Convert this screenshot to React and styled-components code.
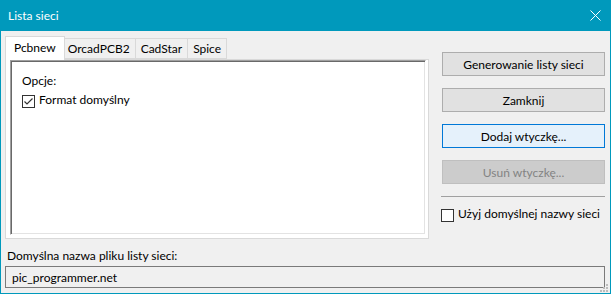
import styled, { createGlobalStyle } from "styled-components";

const GlobalStyle = createGlobalStyle`
  html, body { margin: 0; padding: 0; background: #f0f0f0; }
  body {
    font-family: Lato, "Segoe UI", "Noto Sans", sans-serif;
    font-size: 12px;
    color: #000;
  }
  * { box-sizing: border-box; }
`;

const tabs = ["Pcbnew", "OrcadPCB2", "CadStar", "Spice"];

const CheckBox = ({ checked }) => (
  <Box>
    {checked && (
      <svg width="11" height="11" viewBox="0 0 11 11">
        <polyline points="1.5,5.5 4,8 9.5,2.5" fill="none" stroke="#333" strokeWidth="1.2" />
      </svg>
    )}
  </Box>
);

const App = () => (
  <>
    <GlobalStyle />
    <Window>
      <TitleBar>
        <span>Lista sieci</span>
        <svg width="11" height="11" viewBox="0 0 11 11">
          <path d="M0.5 0.5 L10.5 10.5 M10.5 0.5 L0.5 10.5" stroke="#fff" strokeWidth="1" />
        </svg>
      </TitleBar>

      <Body>
        <TopRow>
          <TabArea>
            <TabStrip>
              {tabs.map((t, i) => (
                <Tab key={t} active={i === 0}>{t}</Tab>
              ))}
            </TabStrip>
            <TabPage>
              <Sunken>
                <div>Opcje:</div>
                <CheckRow>
                  <CheckBox checked />
                  <span>Format domyślny</span>
                </CheckRow>
              </Sunken>
            </TabPage>
          </TabArea>

          <SideColumn>
            <Button>Generowanie listy sieci</Button>
            <Button>Zamknij</Button>
            <Button variant="focus">Dodaj wtyczkę...</Button>
            <Button variant="disabled" disabled>Usuń wtyczkę...</Button>
            <Separator />
            <CheckRow>
              <CheckBox />
              <span>Użyj domyślnej nazwy sieci</span>
            </CheckRow>
          </SideColumn>
        </TopRow>

        <FieldLabel>Domyślna nazwa pliku listy sieci:</FieldLabel>
        <ReadOnlyField>pic_programmer.net</ReadOnlyField>
      </Body>

      <Grip width="9" height="9" viewBox="0 0 9 9">
        <rect x="7" y="1" width="2" height="2" />
        <rect x="4" y="4" width="2" height="2" />
        <rect x="7" y="4" width="2" height="2" />
        <rect x="1" y="7" width="2" height="2" />
        <rect x="4" y="7" width="2" height="2" />
        <rect x="7" y="7" width="2" height="2" />
      </Grip>
    </Window>
  </>
);

const Window = styled.div`
  position: relative;
  width: 611px;
  height: 294px;
  display: flex;
  flex-direction: column;
  background: #f0f0f0;
  border: 1px solid #0099bc;
  border-top: none;
`;

const TitleBar = styled.div`
  height: 31px;
  flex: none;
  display: flex;
  align-items: center;
  justify-content: space-between;
  padding: 0 9px 0 7px;
  background: #0099bc;
  color: #fff;
  font-size: 12px;
`;

const Body = styled.div`
  display: flex;
  flex-direction: column;
  padding: 5px 5px 0 4px;
`;

const TopRow = styled.div`
  display: flex;
`;

const TabArea = styled.div`
  width: 424px;
  display: flex;
  flex-direction: column;
`;

const TabStrip = styled.div`
  height: 23px;
  display: flex;
  align-items: flex-end;
  padding-left: 2px;
  position: relative;
  z-index: 1;
`;

const Tab = styled.div`
  height: ${(p) => (p.active ? "24px" : "21px")};
  margin: ${(p) => (p.active ? "0 -2px -1px -2px" : "0 0 0 -1px")};
  padding: ${(p) => (p.active ? "0 8px 2px" : "0 5px")};
  display: flex;
  align-items: center;
  background: ${(p) => (p.active ? "#fff" : "#f0f0f0")};
  border: 1px solid #d9d9d9;
  border-bottom: ${(p) => (p.active ? "none" : "1px solid #d9d9d9")};
  position: relative;
  z-index: ${(p) => (p.active ? 2 : 1)};
  &:first-child { margin-left: -2px; }
`;

const TabPage = styled.div`
  height: 180px;
  background: #fff;
  border: 1px solid #d9d9d9;
  padding: 0 2px 3px 4px;
  display: flex;
`;

const Sunken = styled.div`
  flex: 1;
  border: 1px solid;
  border-color: #a0a0a0 #fff #fff #a0a0a0;
  box-shadow: inset 1px 1px 0 #696969, inset -1px -1px 0 #e3e3e3;
  padding: 12px 10px 0 11px;
  line-height: 16px;
`;

const CheckRow = styled.div`
  display: flex;
  align-items: flex-start;
  gap: 4px;
  line-height: 16px;
  margin-top: 3px;
`;

const Box = styled.div`
  width: 13px;
  height: 13px;
  margin-top: 3px;
  flex: none;
  border: 1px solid #333;
  background: #fff;
  display: flex;
  align-items: center;
  justify-content: center;
`;

const SideColumn = styled.div`
  width: 164px;
  margin-left: 12px;
  padding-top: 16px;
  display: flex;
  flex-direction: column;
  gap: 12px;

  ${CheckRow} { margin-top: -3px; }
`;

const Button = styled.button`
  height: 24px;
  width: 163px;
  margin-left: 1px;
  font: inherit;
  padding: 0;
  border: 1px solid ${(p) =>
    p.variant === "focus" ? "#0078d7" : p.variant === "disabled" ? "#bfbfbf" : "#adadad"};
  background: ${(p) =>
    p.variant === "focus" ? "#e5f1fb" : p.variant === "disabled" ? "#cccccc" : "#e1e1e1"};
  color: ${(p) => (p.variant === "disabled" ? "#838383" : "#000")};
`;

const Separator = styled.div`
  height: 1px;
  background: #a0a0a0;
`;

const FieldLabel = styled.div`
  margin: 9px 0 2px 2px;
  line-height: 16px;
`;

const ReadOnlyField = styled.div`
  height: 22px;
  width: 600px;
  border: 1px solid #7a7a7a;
  background: #f0f0f0;
  padding-left: 6px;
  display: flex;
  align-items: center;
`;

const Grip = styled.svg`
  position: absolute;
  right: 2px;
  bottom: 1px;
  fill: #bcbcbc;
`;

export default App;
